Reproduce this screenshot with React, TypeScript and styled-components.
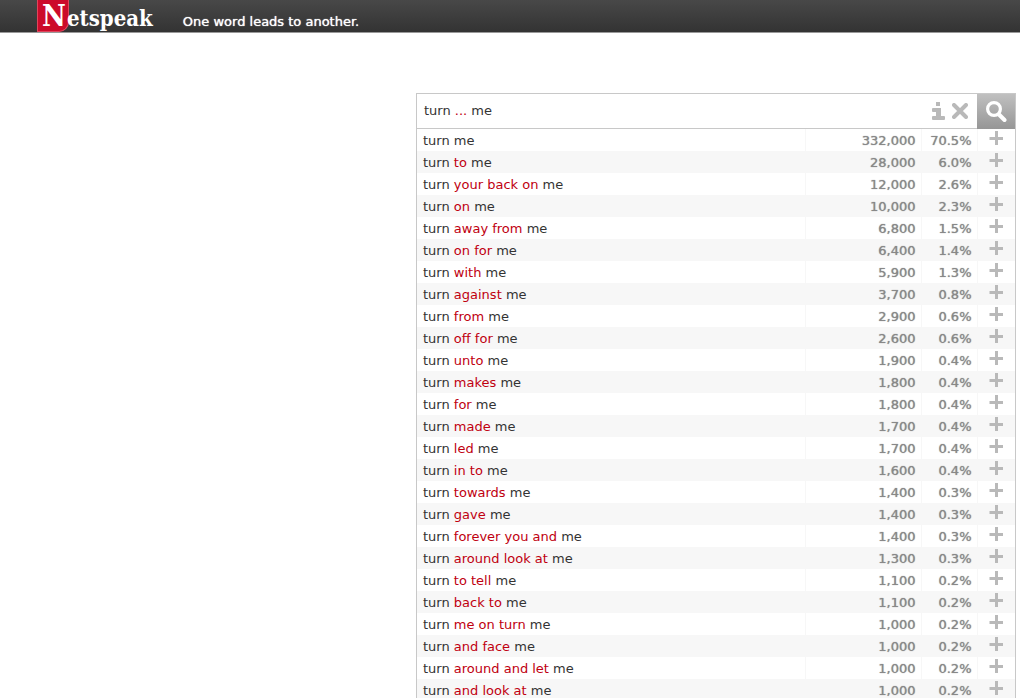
import React, { useState } from 'react';
import styled, { createGlobalStyle } from 'styled-components';

const GlobalStyle = createGlobalStyle`
  * { box-sizing: border-box; }
  html, body { margin: 0; }
  body {
    background: #fff;
    color: #333;
    font: 13px/22px 'DejaVu Sans', Verdana, sans-serif;
  }
  html, body, #root { height: 100%; }
`;

const Page = styled.div`
  height: 100%;
  overflow: hidden;
`;

const Header = styled.header`
  display: flex;
  height: 33px;
  padding-left: 37px;
  gap: 30px;
  border-bottom: 1px solid #999;
  background: linear-gradient(#484848, #333);
  color: #fff;
`;

const Logo = styled.a`
  display: flex;
  align-items: baseline;
  height: 32px;
  color: #fff;
  text-decoration: none;
  font-family: 'DejaVu Serif Condensed', 'DejaVu Serif', serif;
  font-stretch: condensed;
  font-weight: 700;
  font-size: 22px;
  line-height: 32px;
`;

const Initial = styled.span`
  width: 32px;
  height: 32px;
  padding-left: 4px;
  border: 1px solid #e0455c;
  border-top: 0;
  border-radius: 0 0 10px 0;
  background: #cc0a2a;
  font-size: 29px;
`;

const LogoRest = styled.span`
  margin-left: -2px;
`;

const Tagline = styled.p`
  margin: 0;
  padding-top: 11px;
  text-shadow: 0 0 1px currentColor;
`;

const Main = styled.main`
  margin: 60px 4px 0 416px;
  border: 1px solid #c8c8c8;
`;

const SearchBar = styled.form`
  display: flex;
  height: 35px;
  border-bottom: 1px solid #c8c8c8;
`;

const QueryField = styled.div`
  display: grid;
  flex: 1;
  align-items: center;
  padding-left: 7px;

  > * { grid-area: 1 / 1; }
`;

const QueryInput = styled.input`
  width: 100%;
  padding: 0;
  border: 0;
  outline: 0;
  background: none;
  color: transparent;
  caret-color: #333;
  font: inherit;
`;

const QueryText = styled.div`
  white-space: pre;
  pointer-events: none;
`;

const Mark = styled.span`
  color: #c00010;
`;

const Tools = styled.div`
  display: flex;
  align-items: center;
  gap: 6px;
  padding-right: 9px;
`;

const IconButton = styled.button`
  display: flex;
  align-items: center;
  justify-content: center;
  padding: 0;
  border: 0;
  background: none;
  color: #b9b9b9;
`;

const SearchButton = styled(IconButton)`
  width: 38px;
  height: 35px;
  background: linear-gradient(#c0c0c0, #969696);
  color: #fff;
`;

const Results = styled.table`
  width: 100%;
  border-collapse: collapse;
  table-layout: fixed;
`;

const Row = styled.tr`
  height: 22px;
  line-height: 20px;
  &:nth-child(even) { background: #f7f7f7; }
`;

const Phrase = styled.td`
  padding: 2px 6px 0;
`;

const Figure = styled.td`
  padding: 2px 5px 0;
  border-left: 1px solid #f7f7f7;
  color: #888;
  text-align: right;
  text-shadow: 0 0 1px currentColor;
`;

const Action = styled.td`
  padding: 0 0 4px;
  border-left: 1px solid #f7f7f7;
  ${IconButton} { width: 100%; }
`;

const InfoIcon = () => (
  <svg width="15" height="20" viewBox="0 0 15 20" fill="currentColor" aria-hidden="true">
    <path d="M5 1h4v4H5zM2 7h8v8h3q1 0 1 1v2q0 1-1 1H2q-1 0-1-1v-2q0-1 1-1h3v-4H2q-1 0-1-1V8q0-1 1-1z" />
  </svg>
);

const ClearIcon = () => (
  <svg width="16" height="16" viewBox="0 0 16 16" stroke="currentColor" strokeWidth="4" strokeLinecap="round" aria-hidden="true">
    <path d="M2 2l12 12M14 2l-12 12" />
  </svg>
);

const SearchIcon = () => (
  <svg width="22" height="22" viewBox="0 0 22 22" fill="none" stroke="currentColor" aria-hidden="true">
    <circle cx="9" cy="8" r="6.4" strokeWidth="3.2" />
    <path d="M14 13.5l5.5 5.5" strokeWidth="4" strokeLinecap="round" />
  </svg>
);

const PlusIcon = () => (
  <svg width="14" height="14" viewBox="0 0 14 14" stroke="currentColor" strokeWidth="3" aria-hidden="true">
    <path d="M7.5 0v14M.5 7.5h13.5" />
  </svg>
);

const results: [string, string, string][] = [
  ['', '332,000', '70.5%'],
  ['to', '28,000', '6.0%'],
  ['your back on', '12,000', '2.6%'],
  ['on', '10,000', '2.3%'],
  ['away from', '6,800', '1.5%'],
  ['on for', '6,400', '1.4%'],
  ['with', '5,900', '1.3%'],
  ['against', '3,700', '0.8%'],
  ['from', '2,900', '0.6%'],
  ['off for', '2,600', '0.6%'],
  ['unto', '1,900', '0.4%'],
  ['makes', '1,800', '0.4%'],
  ['for', '1,800', '0.4%'],
  ['made', '1,700', '0.4%'],
  ['led', '1,700', '0.4%'],
  ['in to', '1,600', '0.4%'],
  ['towards', '1,400', '0.3%'],
  ['gave', '1,400', '0.3%'],
  ['forever you and', '1,400', '0.3%'],
  ['around look at', '1,300', '0.3%'],
  ['to tell', '1,100', '0.2%'],
  ['back to', '1,100', '0.2%'],
  ['me on turn', '1,000', '0.2%'],
  ['and face', '1,000', '0.2%'],
  ['around and let', '1,000', '0.2%'],
  ['and look at', '1,000', '0.2%'],
];

export default function App() {
  const [query, setQuery] = useState('turn ... me');

  return (
    <Page>
      <GlobalStyle />
      <Header>
        <Logo href="#">
          <Initial>N</Initial>
          <LogoRest>etspeak</LogoRest>
        </Logo>
        <Tagline>One word leads to another.</Tagline>
      </Header>
      <Main>
        <SearchBar onSubmit={(e) => e.preventDefault()}>
          <QueryField>
            <QueryText aria-hidden="true">
              {query.split(/(\.\.\.|[?*])/).map((part, i) => (i % 2 ? <Mark key={i}>{part}</Mark> : part))}
            </QueryText>
            <QueryInput aria-label="Query" value={query} onChange={(e) => setQuery(e.target.value)} />
          </QueryField>
          <Tools>
            <IconButton type="button" aria-label="Help"><InfoIcon /></IconButton>
            <IconButton type="button" aria-label="Clear" onClick={() => setQuery('')}><ClearIcon /></IconButton>
          </Tools>
          <SearchButton type="submit" aria-label="Search"><SearchIcon /></SearchButton>
        </SearchBar>
        <Results>
          <colgroup>
            <col />
            <col width="116" />
            <col width="56" />
            <col width="38" />
          </colgroup>
          <tbody>
            {results.map(([words, count, share]) => (
              <Row key={words}>
                <Phrase>turn {words && <><Mark>{words}</Mark>{' '}</>}me</Phrase>
                <Figure>{count}</Figure>
                <Figure>{share}</Figure>
                <Action>
                  <IconButton type="button" aria-label="Show examples"><PlusIcon /></IconButton>
                </Action>
              </Row>
            ))}
          </tbody>
        </Results>
      </Main>
    </Page>
  );
}
